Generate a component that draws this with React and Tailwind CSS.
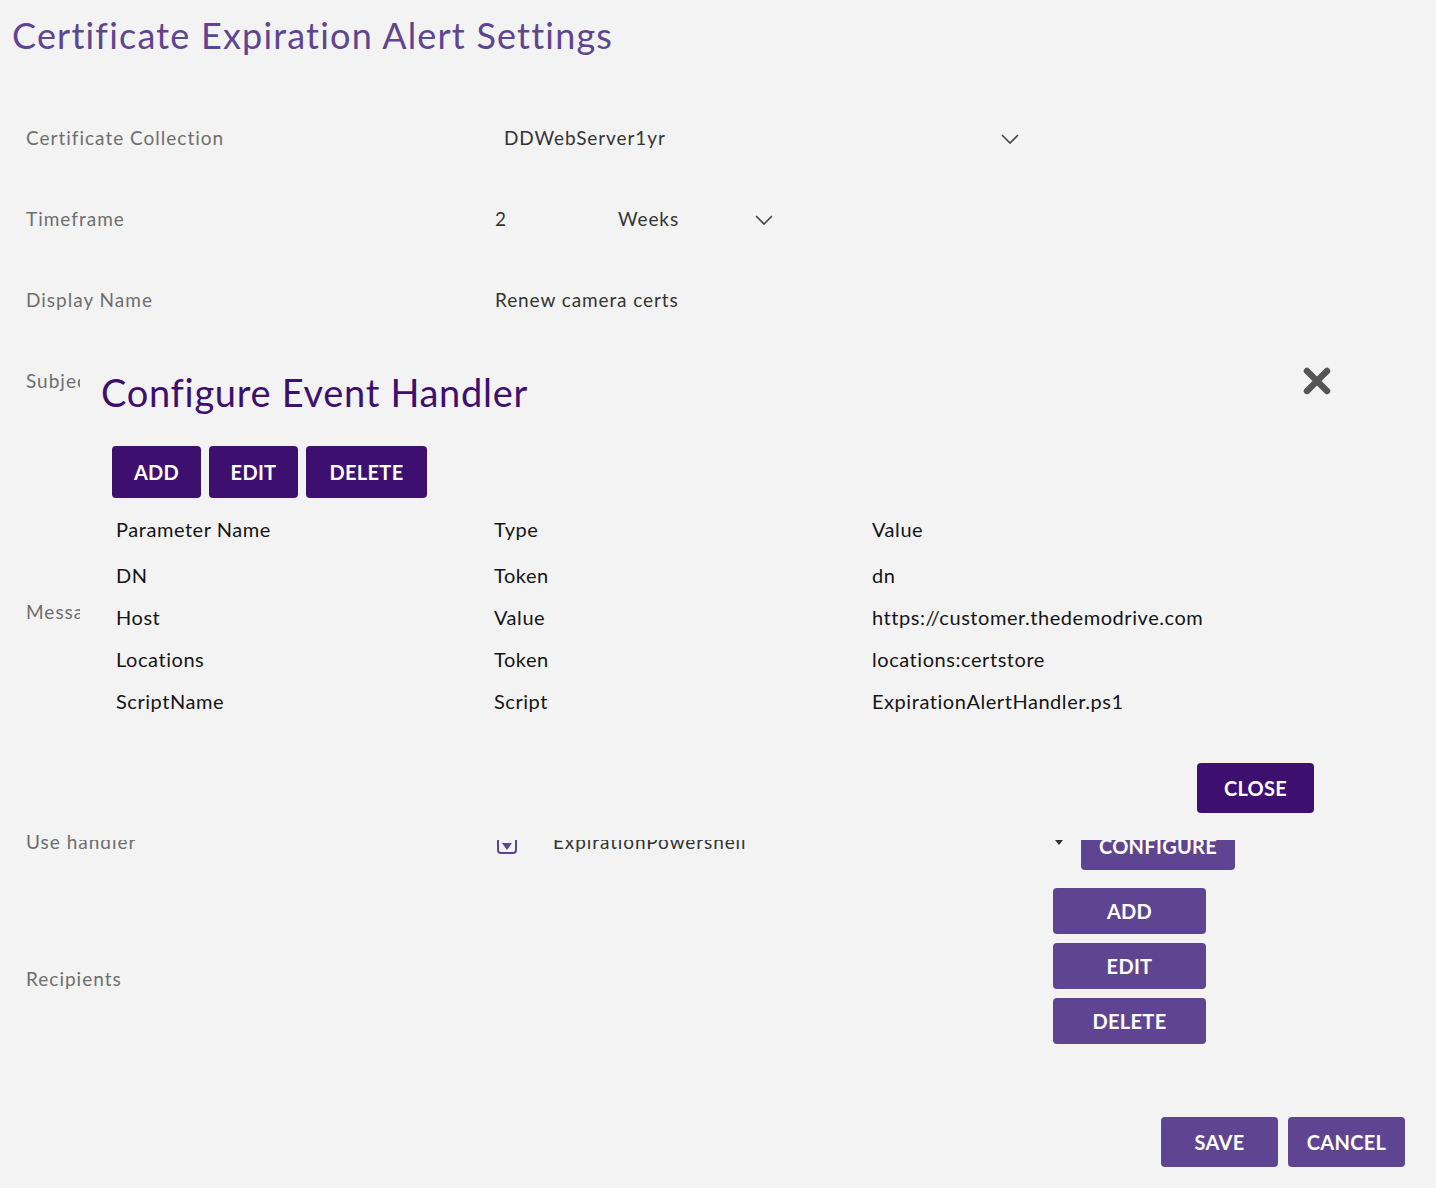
import React from 'react';

const font = { fontFamily: '"Lato", "Liberation Sans", sans-serif' };

function Chevron({ className }) {
  return (
    <svg width="18" height="10" viewBox="0 0 18 10" className={className}>
      <path d="M1 1 L9 9 L17 1" fill="none" stroke="#444" strokeWidth="1.6" />
    </svg>
  );
}

function Row({ label, h, children }) {
  return (
    <div className={`flex items-center ${h}`}>
      <div className="w-[495px] shrink-0 pl-[26px] text-[19px] tracking-[1px] text-[#6e6e6e]">{label}</div>
      <div className="flex-1 flex items-center text-[19px] tracking-[0.9px] text-[#333]">{children}</div>
    </div>
  );
}

const params = [
  ['DN', 'Token', 'dn'],
  ['Host', 'Value', 'https://customer.thedemodrive.com'],
  ['Locations', 'Token', 'locations:certstore'],
  ['ScriptName', 'Script', 'ExpirationAlertHandler.ps1'],
];

export default function App() {
  return (
    <div className="relative min-h-[1188px] bg-[#f3f3f3]" style={font}>
      <h1 className="pl-[12px] pt-[13px] h-[98px] text-[36px] leading-[44px] tracking-[1.2px] text-[#5f4591]">
        Certificate Expiration Alert Settings
      </h1>

      <Row label="Certificate Collection" h="h-[81px]">
        <div className="flex w-[530px] items-center justify-between pl-[9px] pr-[6px]">
          <span>DDWebServer1yr</span>
          <Chevron />
        </div>
      </Row>
      <Row label="Timeframe" h="h-[81px]">
        <span className="w-[123px]">2</span>
        <div className="flex w-[155px] items-center justify-between">
          <span>Weeks</span>
          <Chevron />
        </div>
      </Row>
      <Row label="Display Name" h="h-[81px]">
        <span>Renew camera certs</span>
      </Row>
      <Row label="Subject" h="h-[81px]">
        <span />
      </Row>
      <Row label="Message" h="h-[380px]">
        <span />
      </Row>
      <Row label="Use handler" h="h-[81px]">
        <div className="flex w-[740px] items-center">
          <div className="mt-[2px] ml-[2px] flex h-[20px] w-[20px] items-end justify-center rounded-[4px] border-2 border-[#5f4591] pb-[2px]">
            <svg width="10" height="7" viewBox="0 0 10 7"><path d="M0 0 L10 0 L5 7 Z" fill="#5f4591" /></svg>
          </div>
          <span className="ml-[36px] flex-1">ExpirationPowershell</span>
          <svg width="8" height="5" viewBox="0 0 8 5" className="mr-[18px]"><path d="M0 0 L8 0 L4 5 Z" fill="#333" /></svg>
          <button className="mt-[6px] h-[48px] w-[154px] rounded-[4px] bg-[#5f4591] text-[20px] font-bold tracking-[0.3px] text-white">
            CONFIGURE
          </button>
        </div>
      </Row>
      <div className="flex h-[192px]">
        <div className="w-[495px] shrink-0 pl-[26px] flex items-center text-[19px] tracking-[1px] text-[#6e6e6e]">Recipients</div>
        <div className="ml-[558px] flex flex-col gap-[9px] pt-[5px]">
          {['ADD', 'EDIT', 'DELETE'].map((b) => (
            <button key={b} className="h-[46px] w-[153px] rounded-[4px] bg-[#5f4591] text-[20px] font-bold tracking-[0.3px] text-white">
              {b}
            </button>
          ))}
        </div>
      </div>
      <div className="flex justify-end gap-[10px] pr-[31px] pt-[42px]">
        <button className="h-[50px] w-[117px] rounded-[4px] bg-[#5f4591] text-[20px] font-bold tracking-[0.3px] text-white">SAVE</button>
        <button className="h-[50px] w-[117px] rounded-[4px] bg-[#5f4591] text-[20px] font-bold tracking-[0.3px] text-white">CANCEL</button>
      </div>

      {/* Configure Event Handler dialog */}
      <div className="absolute left-[80px] top-[345px] h-[495px] w-[1274px] bg-[#f3f3f3]">
        <div className="flex items-start justify-between pl-[21px] pr-[23px] pt-[22px]">
          <h2 className="text-[38px] leading-[50px] tracking-[0.7px] text-[#3d0f6f]">Configure Event Handler</h2>
          <svg width="28" height="28" viewBox="0 0 28 28">
            <path d="M4 4 L24 24 M24 4 L4 24" stroke="#555" strokeWidth="6.5" strokeLinecap="round" />
          </svg>
        </div>
        <div className="pl-[32px] pr-[40px]">
          <div className="mt-[29px] flex gap-[8px]">
            <button className="h-[52px] w-[89px] rounded-[4px] bg-[#3d0f6f] text-[20px] font-bold tracking-[0.3px] text-white">ADD</button>
            <button className="h-[52px] w-[89px] rounded-[4px] bg-[#3d0f6f] text-[20px] font-bold tracking-[0.3px] text-white">EDIT</button>
            <button className="h-[52px] w-[121px] rounded-[4px] bg-[#3d0f6f] text-[20px] font-bold tracking-[0.3px] text-white">DELETE</button>
          </div>
          <div className="mt-[8px] text-[20px] tracking-[0.55px] text-[#141414]">
            <div className="grid h-[48px] grid-cols-[378px_378px_1fr] items-center pb-[2px]">
              <span className="pl-[4px]">Parameter Name</span>
              <span className="pl-[4px]">Type</span>
              <span className="pl-[4px]">Value</span>
            </div>
            {params.map((p) => (
              <div key={p[0]} className="grid h-[42px] grid-cols-[378px_378px_1fr] items-center">
                <span className="pl-[4px]">{p[0]}</span>
                <span className="pl-[4px]">{p[1]}</span>
                <span className="pl-[4px]">{p[2]}</span>
              </div>
            ))}
          </div>
          <div className="mt-[41px] flex justify-end">
            <button className="h-[50px] w-[117px] rounded-[4px] bg-[#3d0f6f] text-[20px] font-bold tracking-[0.3px] text-white">CLOSE</button>
          </div>
        </div>
      </div>
    </div>
  );
}
